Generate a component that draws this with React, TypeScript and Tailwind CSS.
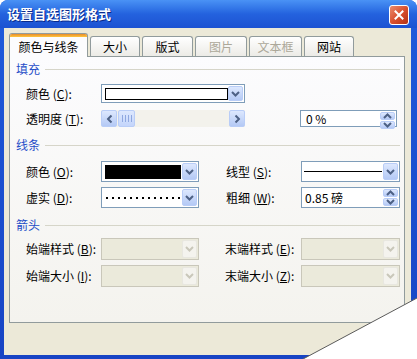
import type { ReactNode } from 'react'

const FONT = '"Noto Sans CJK SC", "Noto Sans", sans-serif'

function Chevron({ dir = 'down', color = '#4d6185' }: { dir?: 'down' | 'up' | 'left' | 'right'; color?: string }) {
  const rot = { down: 0, up: 180, left: 90, right: -90 }[dir]
  return (
    <svg width="9" height="6" viewBox="0 0 9 6" style={{ transform: `rotate(${rot}deg)` }}>
      <path d="M1 1 L4.5 4.5 L8 1" fill="none" stroke={color} strokeWidth="2" />
    </svg>
  )
}

function Label({ text, k, className = '' }: { text: string; k: string; className?: string }) {
  return (
    <span className={`whitespace-nowrap text-[12px] leading-[14px] text-black ${className}`}>
      {text} (<span className="underline">{k}</span>):
    </span>
  )
}

function DropButton({ disabled = false }: { disabled?: boolean }) {
  return (
    <div
      className={`flex w-[15px] shrink-0 items-center justify-center rounded-[2px] border ${
        disabled
          ? 'border-[#e8e7e0] bg-[#f4f3ee]'
          : 'border-[#b9cdf7] bg-gradient-to-b from-[#dde8fe] to-[#b4c9f5]'
      }`}
    >
      <Chevron color={disabled ? '#c9c7ba' : '#4d6185'} />
    </div>
  )
}

function Combo({ w, h, disabled = false, children }: { w: string; h: string; disabled?: boolean; children?: ReactNode }) {
  return (
    <div
      className={`flex ${w} ${h} shrink-0 border p-px ${
        disabled ? 'border-[#c9c7ba] bg-[#ebeadb]' : 'border-[#7f9db9] bg-white'
      }`}
    >
      <div className="flex flex-1 items-center overflow-hidden">{children}</div>
      <DropButton disabled={disabled} />
    </div>
  )
}

function Spin({ w, h, children }: { w: string; h: string; children: ReactNode }) {
  return (
    <div className={`flex ${w} ${h} shrink-0 border border-[#7f9db9] bg-white p-px`}>
      <div className="flex flex-1 items-center text-[12px] leading-[14px] text-black">{children}</div>
      <div className="flex w-[15px] flex-col gap-px">
        <div className="flex flex-1 items-center justify-center rounded-[2px] border border-[#b9cdf7] bg-gradient-to-b from-[#dde8fe] to-[#b4c9f5]">
          <Chevron dir="up" />
        </div>
        <div className="flex flex-1 items-center justify-center rounded-[2px] border border-[#b9cdf7] bg-gradient-to-b from-[#dde8fe] to-[#b4c9f5]">
          <Chevron />
        </div>
      </div>
    </div>
  )
}

function Header({ text, className = '' }: { text: string; className?: string }) {
  return (
    <div className={`flex h-[14px] items-center pl-[6px] pr-[4px] ${className}`}>
      <span className="text-[12px] leading-[14px] text-[#1f4ec8]">{text}</span>
      <div className="ml-[5px] h-px flex-1 bg-[#d6d5c9]" />
    </div>
  )
}

function Tab({ label, w, disabled = false }: { label: string; w: string; disabled?: boolean }) {
  return (
    <div
      className={`flex ${w} h-[20px] items-center justify-center rounded-t-[3px] border border-b-0 border-[#919b9c] bg-gradient-to-b from-white to-[#ecebe6] text-[12px] leading-[14px] ${
        disabled ? 'text-[#aca899]' : 'text-black'
      }`}
    >
      {label}
    </div>
  )
}

export default function App() {
  return (
    <div className="relative h-[359px] w-[417px] overflow-hidden bg-white" style={{ fontFamily: FONT }}>
      <div className="flex h-full flex-col rounded-t-[8px] bg-gradient-to-b from-[#1f5bdc] to-[#1744c4]">
        {/* title bar */}
        <div className="flex h-[28px] shrink-0 items-center justify-between rounded-t-[8px] bg-gradient-to-b from-[#4a92f5] via-[#2462de] to-[#1c52d2] pl-[7px] pr-[8px]">
          <span className="text-[13px] font-bold leading-[16px] text-white [text-shadow:1px_1px_0_#0a2a8a]">
            设置自选图形格式
          </span>
          <div className="mt-[2px] flex h-[20px] w-[20px] items-center justify-center rounded-[3px] border border-white bg-gradient-to-br from-[#e98a6c] via-[#d9502f] to-[#b33113]">
            <svg width="10" height="10" viewBox="0 0 10 10">
              <path d="M1.5 1.5 L8.5 8.5 M8.5 1.5 L1.5 8.5" stroke="white" strokeWidth="2" strokeLinecap="square" />
            </svg>
          </div>
        </div>

        {/* body */}
        <div className="mb-[4px] ml-[4px] mr-[6px] flex flex-1 flex-col bg-[#ece9d8] pl-[5px] pr-[6px] pt-[5px]">
          <div className="flex h-[23px] items-end gap-[2px]">
            <div className="relative z-10 -mb-px flex h-[24px] w-[79px] flex-col overflow-hidden rounded-t-[3px] border border-b-0 border-[#919b9c] bg-[#fcfcfe]">
              <div className="h-[3px] bg-gradient-to-b from-[#e68b2c] to-[#ffc73c]" />
              <div className="flex flex-1 items-center justify-center text-[12px] leading-[14px] text-black">颜色与线条</div>
            </div>
            <Tab label="大小" w="w-[50px]" />
            <Tab label="版式" w="w-[51px]" />
            <Tab label="图片" w="w-[52px]" disabled />
            <Tab label="文本框" w="w-[53px]" disabled />
            <Tab label="网站" w="w-[50px]" />
          </div>

          {/* panel */}
          <div className="h-[267px] border border-[#919b9c] bg-gradient-to-b from-[#fcfcfe] to-[#f4f3ee] pt-[5px]">
            <Header text="填充" />

            <div className="mt-[8px] flex h-[19px] items-center pl-[16px]">
              <Label text="颜色" k="C" className="w-[75px]" />
              <Combo w="w-[144px]" h="h-[19px]">
                <div className="ml-[2px] h-[12px] w-[123px] border border-black bg-white" />
              </Combo>
            </div>

            <div className="mt-[7px] flex h-[17px] items-center pl-[16px]">
              <Label text="透明度" k="T" className="w-[75px]" />
              <div className="flex h-[17px] w-[144px] bg-[#f3f2ec]">
                <div className="flex w-[16px] items-center justify-center rounded-[2px] border border-[#b9cdf7] bg-gradient-to-b from-[#dde8fe] to-[#b4c9f5]">
                  <Chevron dir="left" />
                </div>
                <div className="ml-px flex w-[17px] items-center justify-center gap-[2px] rounded-[2px] border border-[#b9cdf7] bg-gradient-to-b from-[#dde8fe] to-[#c4d5fb]">
                  <div className="h-[7px] w-px bg-[#8fa8e0]" />
                  <div className="h-[7px] w-px bg-[#8fa8e0]" />
                  <div className="h-[7px] w-px bg-[#8fa8e0]" />
                  <div className="h-[7px] w-px bg-[#8fa8e0]" />
                </div>
                <div className="flex-1" />
                <div className="flex w-[16px] items-center justify-center rounded-[2px] border border-[#b9cdf7] bg-gradient-to-b from-[#dde8fe] to-[#b4c9f5]">
                  <Chevron dir="right" />
                </div>
              </div>
              <div className="w-[55px]" />
              <Spin w="w-[97px]" h="h-[17px]">
                <span className="pl-[4px]">0 %</span>
              </Spin>
            </div>

            <Header text="线条" className="mt-[11px]" />

            <div className="mt-[9px] flex h-[21px] items-center pl-[16px]">
              <Label text="颜色" k="O" className="w-[75px]" />
              <Combo w="w-[98px]" h="h-[21px]">
                <div className="ml-[2px] h-[14px] w-[76px] bg-black" />
              </Combo>
              <div className="w-[27px]" />
              <Label text="线型" k="S" className="w-[75px]" />
              <Combo w="w-[99px]" h="h-[21px]">
                <div className="mx-[1px] h-px flex-1 bg-black" />
              </Combo>
            </div>

            <div className="mt-[5px] flex h-[21px] items-center pl-[16px]">
              <Label text="虚实" k="D" className="w-[75px]" />
              <Combo w="w-[98px]" h="h-[21px]">
                <div className="mx-[1px] h-[2px] flex-1 bg-[radial-gradient(circle,#000_1px,transparent_1.2px)] bg-[length:6px_2px]" />
              </Combo>
              <div className="w-[27px]" />
              <Label text="粗细" k="W" className="w-[75px]" />
              <Spin w="w-[99px]" h="h-[21px]">
                <span className="whitespace-nowrap pl-[2px]">0.85 磅</span>
              </Spin>
            </div>

            <Header text="箭头" className="mt-[10px]" />

            <div className="mt-[6px] flex h-[21px] items-center pl-[16px]">
              <Label text="始端样式" k="B" className="w-[75px]" />
              <Combo w="w-[98px]" h="h-[22px]" disabled />
              <div className="w-[26px]" />
              <Label text="末端样式" k="E" className="w-[76px]" />
              <Combo w="w-[99px]" h="h-[22px]" disabled />
            </div>

            <div className="mt-[6px] flex h-[21px] items-center pl-[16px]">
              <Label text="始端大小" k="I" className="w-[75px]" />
              <Combo w="w-[98px]" h="h-[22px]" disabled />
              <div className="w-[26px]" />
              <Label text="末端大小" k="Z" className="w-[76px]" />
              <Combo w="w-[99px]" h="h-[22px]" disabled />
            </div>
          </div>
        </div>
      </div>

      {/* page curl over the bottom-right corner */}
      <svg className="absolute bottom-0 right-0" width="114" height="63" viewBox="0 0 114 63">
        <polygon points="0,63 114,2 114,63" fill="white" />
        <line x1="0" y1="63" x2="114" y2="2" stroke="#5a5a5a" strokeWidth="1" />
      </svg>
    </div>
  )
}
